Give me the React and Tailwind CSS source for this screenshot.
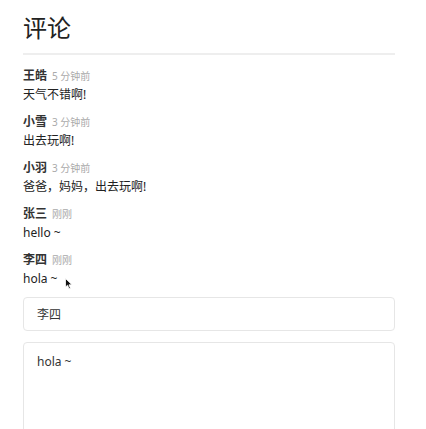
import React, { useState } from "react";

const initialComments = [
  { id: 1, user: "王皓", time: "5 分钟前", text: "天气不错啊!" },
  { id: 2, user: "小雪", time: "3 分钟前", text: "出去玩啊!" },
  { id: 3, user: "小羽", time: "3 分钟前", text: "爸爸，妈妈，出去玩啊!" },
  { id: 4, user: "张三", time: "刚刚", text: "hello ~" },
  { id: 5, user: "李四", time: "刚刚", text: "hola ~" },
];

const font = { fontFamily: '"Noto Sans", "Noto Sans CJK SC", sans-serif' };

const Comment = ({ data }) => (
  <div className="mb-[9px]">
    <div className="flex items-baseline gap-[5px] leading-[18px]">
      <span className="text-[12px] font-bold text-[#333]">{data.user}</span>
      <span className="text-[10px] text-[#aaa]">{data.time}</span>
    </div>
    <div className="text-[12px] leading-[19px] text-[#222]">{data.text}</div>
  </div>
);

const App = () => {
  const [comments] = useState(initialComments);
  const [user, setUser] = useState("李四");
  const [content, setContent] = useState("hola ~");

  return (
    <div className="h-screen overflow-hidden bg-white px-[23px] pt-[12px]" style={font}>
      <div className="w-[372px]">
        <h1 className="text-[24px] leading-[32px] font-normal text-[#222]">评论</h1>
        <div className="mt-[9px] h-[2px] bg-[#eeeeee]"></div>
        <div className="mt-[12px] relative">
          {comments.map((c) => (
            <Comment key={c.id} data={c} />
          ))}
          {/* mouse pointer */}
          <svg className="absolute left-[42px] top-[211px]" width="8" height="12" viewBox="0 0 8 12">
            <path d="M0.5 0.5 L0.5 9 L2.6 7.2 L4 10.8 L5.4 10.2 L4 6.8 L7 6.8 Z" fill="#111" stroke="#fff" strokeWidth="0.8" />
          </svg>
        </div>
        <div className="mt-[4px]">
          <input
            className="w-full h-[34px] rounded-[4px] border border-[#e6e6e6] px-[13px] text-[12px] text-[#333] outline-none"
            value={user}
            onChange={(e) => setUser(e.target.value)}
          />
          <textarea
            className="mt-[11px] block w-full h-[120px] rounded-[4px] border border-[#e6e6e6] px-[13px] py-[10px] text-[12px] text-[#333] outline-none resize-none"
            value={content}
            onChange={(e) => setContent(e.target.value)}
          />
        </div>
      </div>
    </div>
  );
};

export default App;
